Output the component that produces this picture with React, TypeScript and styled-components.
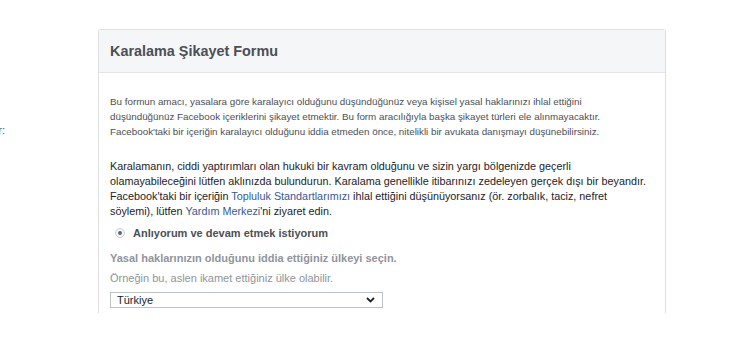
import styled, { createGlobalStyle } from "styled-components";

const GlobalStyle = createGlobalStyle`
  html, body {
    margin: 0;
    padding: 0;
    background: #fff;
    font-family: "Liberation Sans", Arial, Helvetica, sans-serif;
  }
`;

const Page = styled.div`
  display: flex;
  align-items: flex-start;
  padding-top: 29px;
  height: 333px;
  overflow: hidden;
`;

const Sidebar = styled.nav`
  width: 5px;
  margin-right: 93px;
  overflow: hidden;
  display: flex;
  flex-direction: column;
  align-items: flex-end;
  padding-top: 95px;
`;

const SideLink = styled.a`
  white-space: nowrap;
  font-size: 11px;
  color: #365899;
  text-decoration: none;
`;

const Card = styled.section`
  width: 568px;
  box-sizing: border-box;
  border: 1px solid #dddfe2;
  border-bottom: none;
  border-radius: 3px 3px 0 0;
  background: #fff;
`;

const Header = styled.header`
  background: #f5f6f7;
  border-bottom: 1px solid #e5e5e5;
  height: 43px;
  box-sizing: border-box;
  padding: 0 11px;
  display: flex;
  align-items: center;
`;

const Title = styled.h2`
  margin: 0;
  font-size: 14.4px;
  font-weight: bold;
  color: #4b4f56;
`;

const Body = styled.div`
  padding: 21px 11px 5px;
  display: flex;
  flex-direction: column;
`;

const Paragraph = styled.p<{ $muted?: boolean; $size: number }>`
  margin: 0;
  font-size: ${(p) => p.$size}px;
  line-height: 15px;
  white-space: nowrap;
  color: ${(p) => (p.$muted ? "#4b4f56" : "#1d2129")};
`;

const Link = styled.a`
  color: #365899;
  text-decoration: none;
`;

const Spacer = styled.div<{ $h: number }>`
  height: ${(p) => p.$h}px;
`;

const RadioRow = styled.label`
  display: flex;
  align-items: center;
  gap: 8px;
  padding-left: 5px;
  height: 16px;
  font-size: 11px;
  font-weight: bold;
  color: #4b4f56;
`;

const RadioDot = styled.span`
  width: 10px;
  height: 10px;
  box-sizing: border-box;
  border-radius: 50%;
  border: 1px solid #ccd0d5;
  background: #f5f6f7;
  display: flex;
  align-items: center;
  justify-content: center;

  &::after {
    content: "";
    width: 4px;
    height: 4px;
    border-radius: 50%;
    background: #606770;
  }
`;

const FieldLabel = styled.div`
  font-size: 11px;
  font-weight: bold;
  line-height: 16px;
  color: #90949c;
`;

const FieldHint = styled.div`
  font-size: 11px;
  line-height: 15px;
  color: #90949c;
`;

const Select = styled.div`
  width: 273px;
  height: 16px;
  box-sizing: border-box;
  border: 1px solid #bec3c9;
  background: #fff;
  display: flex;
  align-items: center;
  justify-content: space-between;
  padding: 0 7px 0 6px;
  font-size: 11px;
  color: #1d2129;
`;

const Chevron = () => (
  <svg width="9" height="6" viewBox="0 0 9 6">
    <path
      d="M1 1 L4.5 4.4 L8 1"
      fill="none"
      stroke="#1d2129"
      strokeWidth="1.8"
    />
  </svg>
);

export default function App() {
  return (
    <>
      <GlobalStyle />
      <Page>
        <Sidebar>
          <SideLink href="#">Raporu gönder:</SideLink>
        </Sidebar>
        <Card>
          <Header>
            <Title>Karalama Şikayet Formu</Title>
          </Header>
          <Body>
            <Paragraph $muted $size={9.8}>
              Bu formun amacı, yasalara göre karalayıcı olduğunu düşündüğünüz
              veya kişisel yasal haklarınızı ihlal ettiğini
              <br />
              düşündüğünüz Facebook içeriklerini şikayet etmektir. Bu form
              aracılığıyla başka şikayet türleri ele alınmayacaktır.
              <br />
              Facebook'taki bir içeriğin karalayıcı olduğunu iddia etmeden
              önce, nitelikli bir avukata danışmayı düşünebilirsiniz.
            </Paragraph>
            <Spacer $h={20} />
            <Paragraph $size={10.8}>
              Karalamanın, ciddi yaptırımları olan hukuki bir kavram olduğunu
              ve sizin yargı bölgenizde geçerli
              <br />
              olamayabileceğini lütfen aklınızda bulundurun. Karalama
              genellikle itibarınızı zedeleyen gerçek dışı bir beyandır.
              <br />
              Facebook'taki bir içeriğin{" "}
              <Link href="#">Topluluk Standartlarımızı</Link> ihlal ettiğini
              düşünüyorsanız (ör. zorbalık, taciz, nefret
              <br />
              söylemi), lütfen <Link href="#">Yardım Merkezi</Link>'ni ziyaret
              edin.
            </Paragraph>
            <Spacer $h={6} />
            <RadioRow>
              <RadioDot />
              Anlıyorum ve devam etmek istiyorum
            </RadioRow>
            <Spacer $h={9} />
            <FieldLabel>
              Yasal haklarınızın olduğunu iddia ettiğiniz ülkeyi seçin.
            </FieldLabel>
            <Spacer $h={5} />
            <FieldHint>Örneğin bu, aslen ikamet ettiğiniz ülke olabilir.</FieldHint>
            <Spacer $h={6} />
            <Select>
              <span>Türkiye</span>
              <Chevron />
            </Select>
          </Body>
        </Card>
      </Page>
    </>
  );
}
